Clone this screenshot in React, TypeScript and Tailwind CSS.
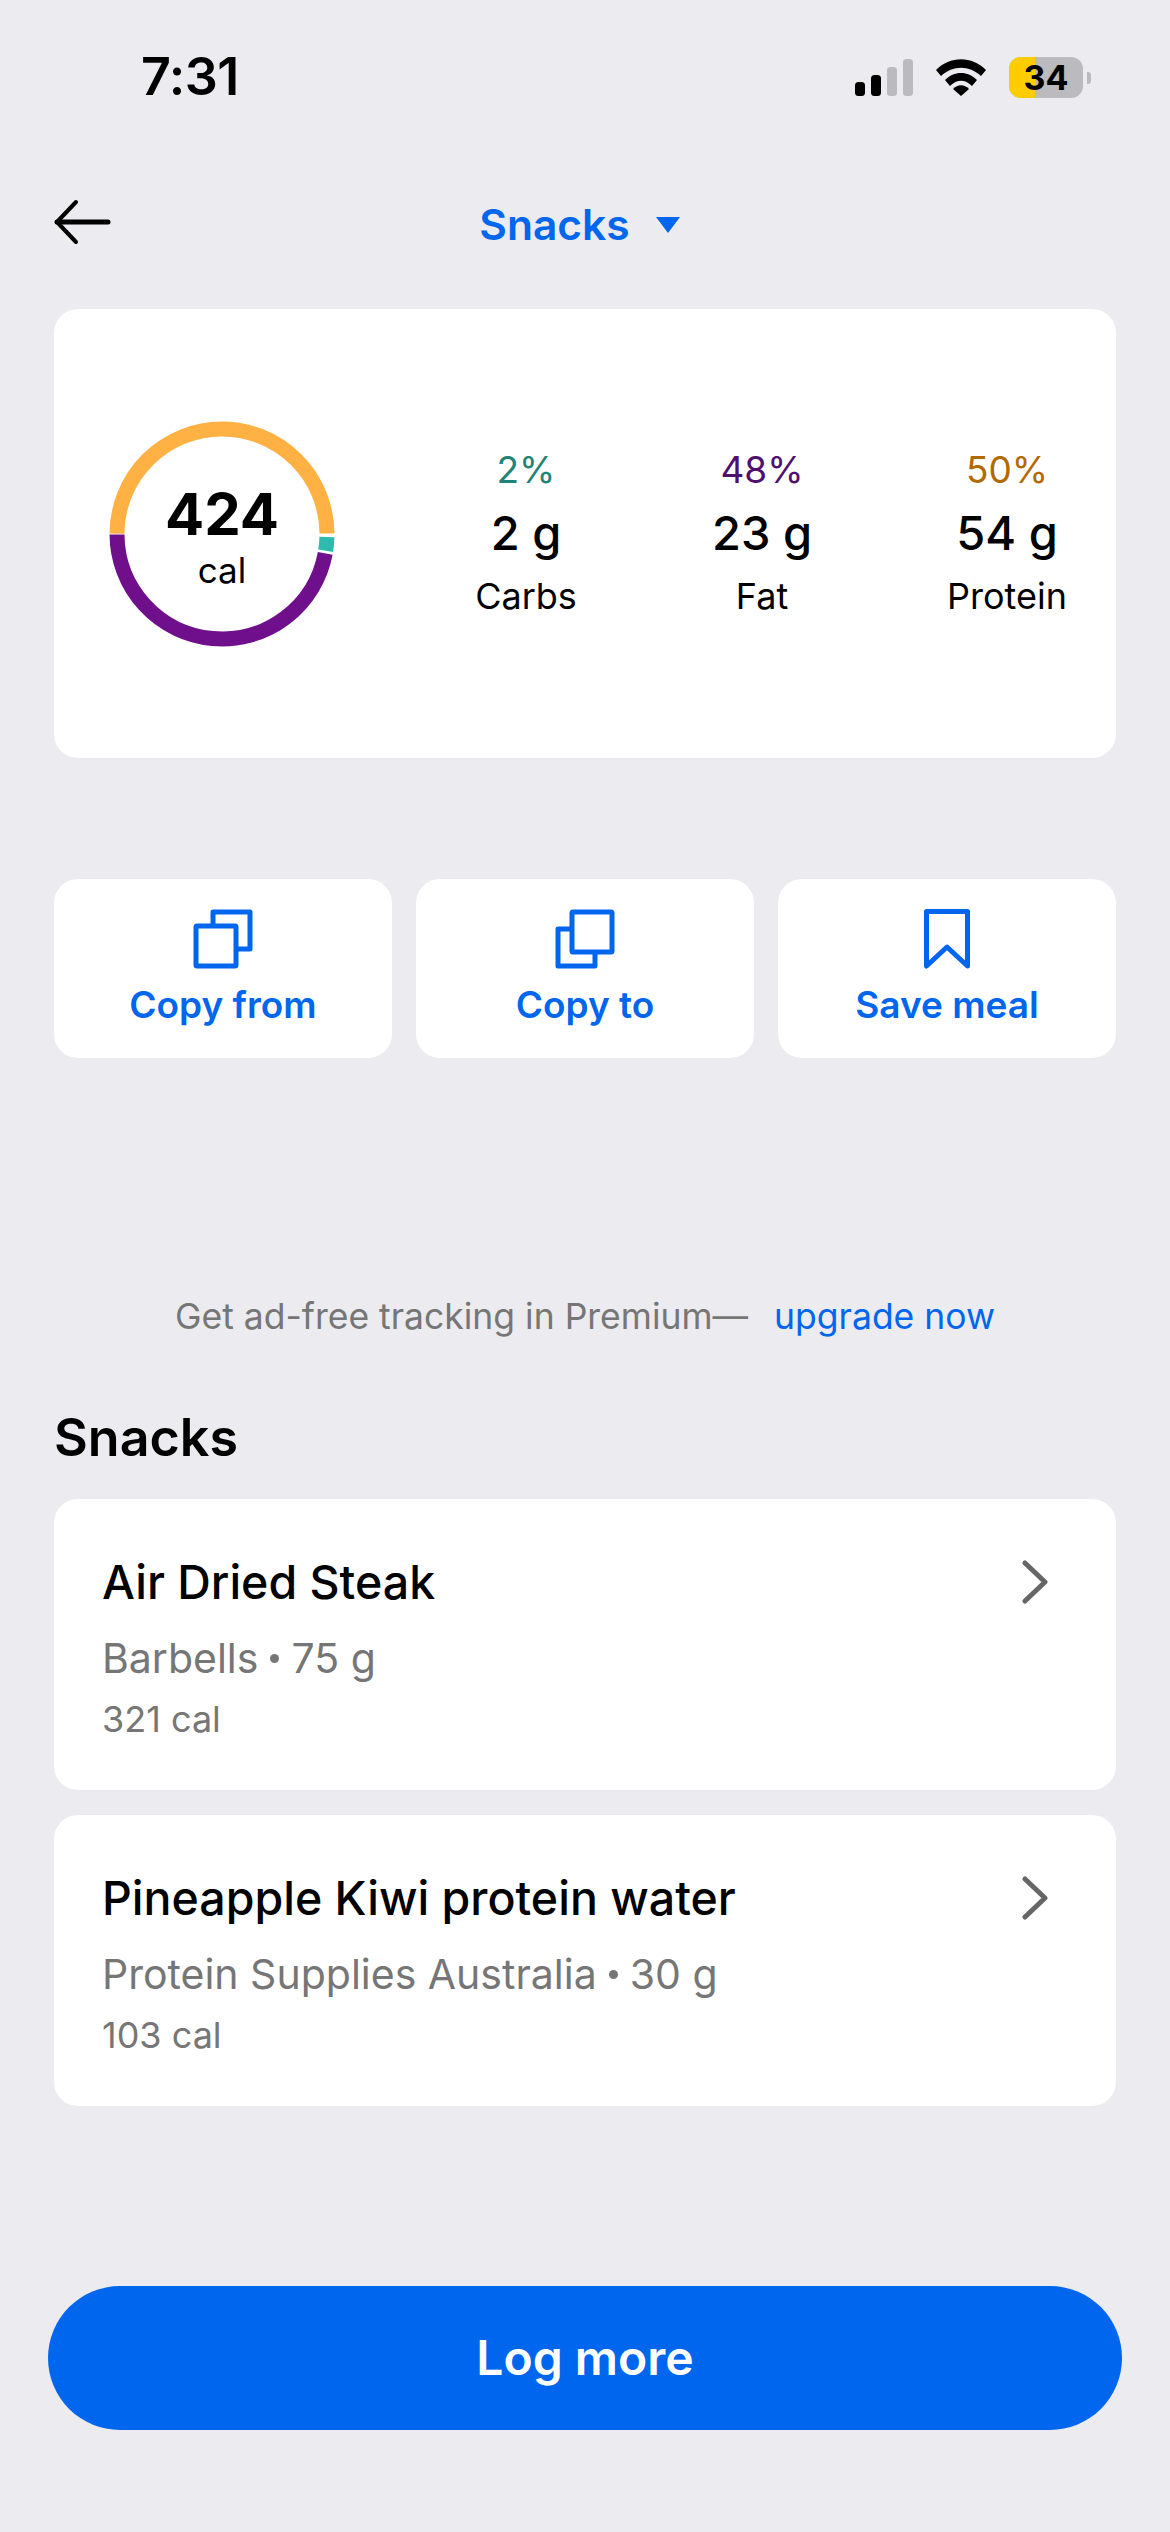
import React from "react";

const blue = "#0066EE";

function polar(r: number, deg: number) {
  const a = (deg * Math.PI) / 180;
  return [222 + r * Math.cos(a), 534 + r * Math.sin(a)];
}

function Arc({ from, to, color }: { from: number; to: number; color: string }) {
  const [x1, y1] = polar(105, from);
  const [x2, y2] = polar(105, to);
  const large = to - from > 180 ? 1 : 0;
  return (
    <path
      d={`M${x1 - 109} ${y1 - 421}A105 105 0 ${large} 1 ${x2 - 109} ${y2 - 421}`}
      fill="none"
      stroke={color}
      strokeWidth="15"
    />
  );
}

function Ring() {
  return (
    <div className="relative h-[226px] w-[226px] shrink-0">
      <svg width="226" height="226" viewBox="0 0 226 226">
        <Arc from={180.2} to={359.7} color="#FFB144" />
        <Arc from={1.6} to={9.2} color="#2DBBAE" />
        <Arc from={10.6} to={179.7} color="#6F0F8C" />
      </svg>
      <div className="absolute inset-0 flex flex-col items-center pt-[59px]">
        <span className="text-[58px] leading-[68px] font-bold text-black">424</span>
        <span className="mt-[1px] text-[35px] leading-[42px] text-black">cal</span>
      </div>
    </div>
  );
}

function Macro({ pct, grams, name, color, cls }: { pct: string; grams: string; name: string; color: string; cls: string }) {
  return (
    <div className={`flex w-[120px] flex-col items-center whitespace-nowrap pb-[2px] ${cls}`}>
      <span className="text-[37px] leading-[42px]" style={{ color }}>{pct}</span>
      <span className="mt-[15px] text-[47px] leading-[54px] text-black [font-weight:450]">{grams}</span>
      <span className="mt-[15px] text-[36px] leading-[42px] text-black">{name}</span>
    </div>
  );
}

function CopyIcon({ backUpper }: { backUpper: boolean }) {
  return (
    <svg width="60" height="60" viewBox="0 0 60 60" fill="none" stroke={blue} strokeWidth="5" strokeLinejoin="round">
      {backUpper ? (
        <>
          <path d="M20 17V3H57V40H43" />
          <rect x="3" y="17" width="40" height="40" rx="1" />
        </>
      ) : (
        <>
          <path d="M17 20H3V57H40V43" />
          <rect x="17" y="3" width="40" height="40" rx="1" />
        </>
      )}
    </svg>
  );
}

function ActionCard({ label, icon }: { label: string; icon: React.ReactNode }) {
  return (
    <div className="flex h-[179px] flex-col items-center rounded-[24px] bg-white pt-[30px]">
      <div className="flex h-[60px] items-center justify-center">{icon}</div>
      <span className="mt-[14px] text-[37px] leading-[44px] font-semibold text-[#0066EE]">{label}</span>
    </div>
  );
}

function FoodCard({ name, brand, amount, cal }: { name: string; brand: string; amount: string; cal: string }) {
  return (
    <div className="flex h-[291px] items-start justify-between rounded-[24px] bg-white pt-[55px] pr-[66px] pl-[48px]">
      <div className="flex flex-col">
        <span className="text-[46.5px] leading-[56px] font-medium text-black">{name}</span>
        <span className="mt-[24px] flex items-center gap-[12px] text-[41px] leading-[48px] text-[#767676]">
          {brand}
          <span className="h-[9px] w-[9px] rounded-full bg-[#767676]" />
          {amount}
        </span>
        <span className="mt-[16px] text-[36px] leading-[42px] text-[#767676]">{cal}</span>
      </div>
      <svg className="mt-[6px]" width="30" height="44" viewBox="0 0 30 44" fill="none" stroke="#666666" strokeWidth="5" strokeLinecap="round" strokeLinejoin="round">
        <path d="M5 3L25 22L5 41" />
      </svg>
    </div>
  );
}

export default function App() {
  return (
    <div className="flex h-[2532px] w-[1170px] flex-col overflow-hidden bg-[#EBEBF0] text-black [font-family:Inter,'Liberation_Sans',sans-serif]">
      {/* status bar */}
      <div className="flex h-[158px] items-start justify-between pt-[52px] pr-[79px] pl-[141px]">
        <span className="text-[52px] leading-[50px] font-semibold tracking-[-0.5px]">7:31</span>
        <div className="flex items-center gap-[23px] pt-[5px]">
          <svg width="58" height="38" viewBox="0 0 58 38">
            <rect x="0" y="23" width="10" height="14" rx="3.5" fill="#000" />
            <rect x="16" y="16" width="10" height="21" rx="3.5" fill="#000" />
            <rect x="32" y="8" width="10" height="29" rx="3.5" fill="#BABABF" />
            <rect x="48" y="0" width="10" height="37" rx="3.5" fill="#BABABF" />
          </svg>
          <svg width="50" height="38" viewBox="0 0 50 38">
            <path d="M0 11C14 -3.500 36 -3.500 50 11L45 17C33 6 17 6 5 17Z" fill="#000" />
            <path d="M9 21C18 11.500 32 11.500 41 21L36 27C29 20 21 20 14 27Z" fill="#000" />
            <path d="M17 30C22 25 28 25 33 30L25 37Z" fill="#000" />
          </svg>
          <div className="flex items-center gap-[4px]">
            <div className="relative flex h-[41px] w-[74px] items-center justify-center overflow-hidden rounded-[12px] bg-[#BABABF]">
              <div className="absolute top-0 bottom-0 left-0 w-[26px] bg-[#FFCC00]" />
              <span className="relative text-[34px] leading-[41px] font-bold text-black">34</span>
            </div>
            <div className="h-[12px] w-[4px] rounded-r-[3px] bg-[#BABABF]" />
          </div>
        </div>
      </div>

      {/* nav */}
      <div className="relative flex h-[151px] items-start justify-center pt-[41px]">
        <svg className="absolute top-[41px] left-[54px]" width="58" height="46" viewBox="0 0 58 46" fill="none" stroke="#000" strokeLinecap="round" strokeLinejoin="round">
          <path d="M3 23H54" strokeWidth="5" />
          <path d="M22 3L3 23L22 43" strokeWidth="4" />
        </svg>
        <div className="mr-[10px] flex items-center gap-[25px]">
          <span className="text-[42.500px] leading-[52px] font-semibold text-[#0066EE]">Snacks</span>
          <svg width="26" height="18" viewBox="0 0 26 18">
            <path d="M1 1H25L13 17Z" fill="#0066EE" />
          </svg>
        </div>
      </div>

      <div className="flex flex-col px-[54px]">
        {/* summary */}
        <div className="flex h-[449px] items-center rounded-[24px] bg-white pl-[55px]">
          <Ring />
          <Macro cls="ml-[131px]" pct="2%" grams="2 g" name="Carbs" color="#1F8376" />
          <Macro cls="ml-[116px]" pct="48%" grams="23 g" name="Fat" color="#4F0F6E" />
          <Macro cls="ml-[125px]" pct="50%" grams="54 g" name="Protein" color="#B26A00" />
        </div>

        {/* actions */}
        <div className="mt-[121px] grid grid-cols-3 gap-[24px]">
          <ActionCard label="Copy from" icon={<CopyIcon backUpper={true} />} />
          <ActionCard label="Copy to" icon={<CopyIcon backUpper={false} />} />
          <ActionCard
            label="Save meal"
            icon={
              <svg width="46" height="60" viewBox="0 0 46 60" fill="none" stroke={blue} strokeWidth="5" strokeLinejoin="round">
                <path d="M2.5 2.5H43.5V57L23 38L2.5 57Z" />
              </svg>
            }
          />
        </div>

        {/* promo */}
        <div className="mt-[237px] flex h-[44px] items-center justify-center gap-[26px] text-[35.500px]">
          <span className="text-[#767676]">Get ad-free tracking in Premium—</span>
          <span className="text-[#0066EE]">upgrade now</span>
        </div>

        <div className="mt-[67px] text-[52px] leading-[64px] font-semibold text-black">Snacks</div>

        <div className="mt-[29px] flex flex-col gap-[25px]">
          <FoodCard name="Air Dried Steak" brand="Barbells" amount="75 g" cal="321 cal" />
          <FoodCard name="Pineapple Kiwi protein water" brand="Protein Supplies Australia" amount="30 g" cal="103 cal" />
        </div>
      </div>

      <div className="mt-[180px] px-[48px]">
        <div className="flex h-[144px] items-center justify-center rounded-[72px] bg-[#0066EE]">
          <span className="text-[48px] font-semibold text-white">Log more</span>
        </div>
      </div>
    </div>
  );
}
